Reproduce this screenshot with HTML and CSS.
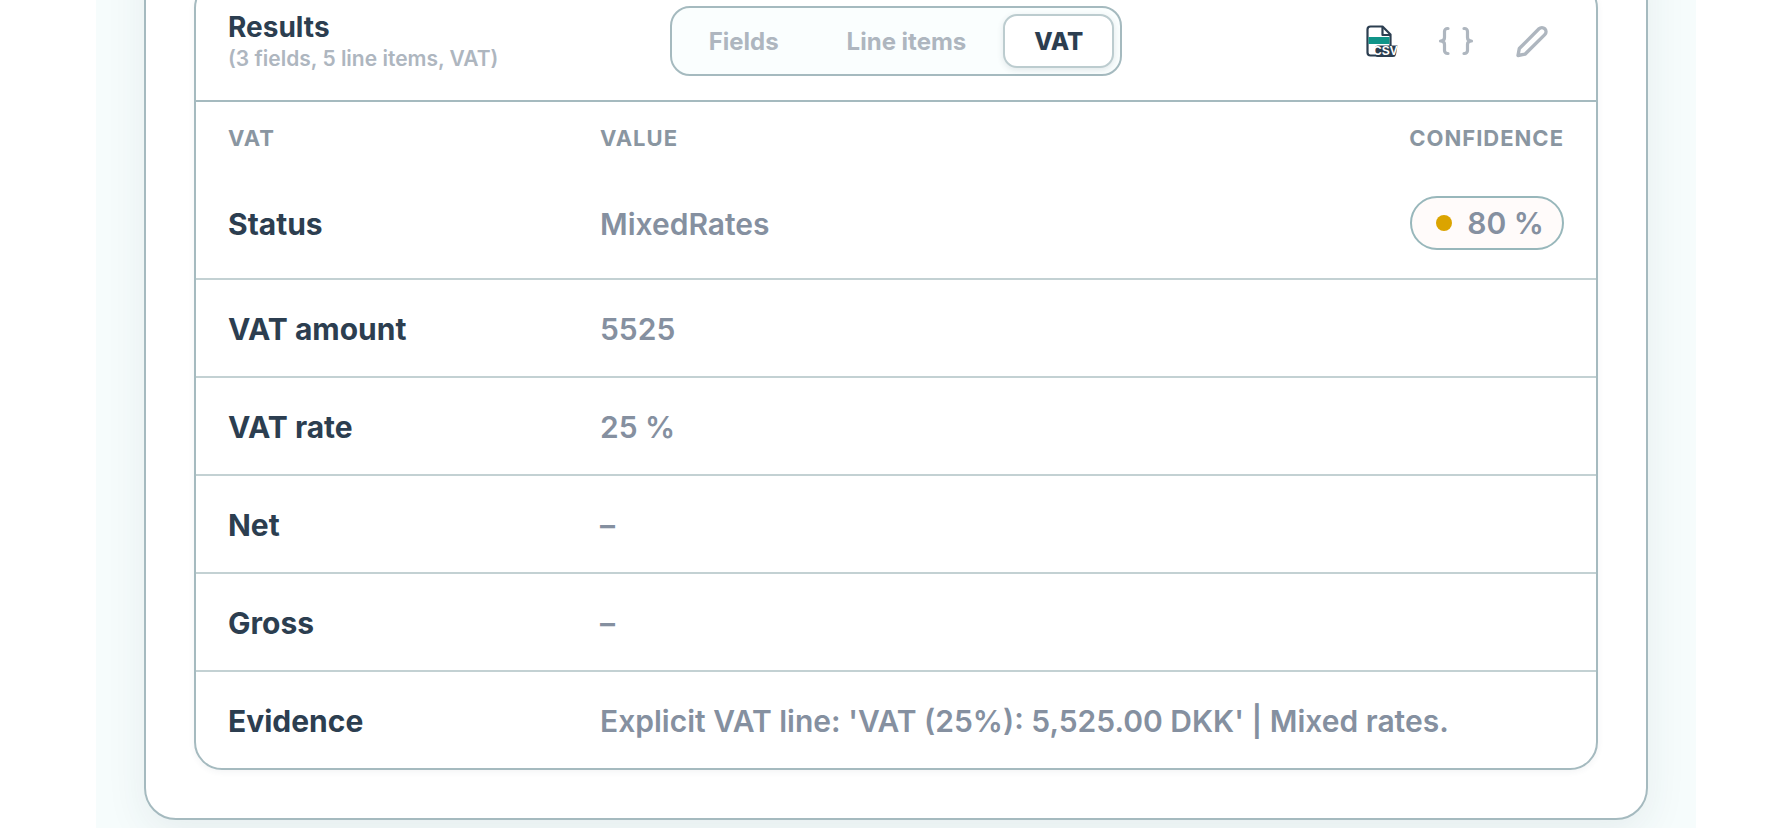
FILE: index.html
```
<!DOCTYPE html>
<html lang="en">
<head>
  <meta charset="UTF-8">
  <title>Results - VAT</title>
  <meta name="viewport" content="width=device-width, initial-scale=1">
  <link rel="stylesheet" href="styles.css">
</head>
<body>
  <main class="page">
    <section class="card">
      <div class="results">
        <header class="results-header">
          <div class="results-title">
            <h2>Results</h2>
            <p>(3 fields, 5 line items, VAT)</p>
          </div>

          <div class="tabs" role="tablist">
            <button type="button" class="tab" role="tab" aria-selected="false">Fields</button>
            <button type="button" class="tab" role="tab" aria-selected="false">Line items</button>
            <button type="button" class="tab active" role="tab" aria-selected="true">VAT</button>
          </div>

          <div class="actions">
            <button type="button" class="icon-btn" aria-label="Download CSV">
              <svg width="36" height="36" viewBox="0 0 36 36" fill="none">
                <path d="M20.5 3.5h-12a3 3 0 0 0-3 3v23a3 3 0 0 0 3 3h17a3 3 0 0 0 3-3v-18z" stroke="#2c3e50" stroke-width="2.2" stroke-linejoin="round"/>
                <path d="M20.5 4v8h8" stroke="#2c3e50" stroke-width="2.2" stroke-linejoin="round"/>
                <rect x="6.5" y="14" width="21" height="7" fill="#109488"/>
                <path d="M16 22.5h19.500l-1.500 9a3 3 0 0 1-3 2.500H16a3 3 0 0 1-3-3v-5.500a3 3 0 0 1 3-3z" fill="#2c3e50"/>
                <text x="11" y="32" class="csv-text">CSV</text>
              </svg>
            </button>
            <button type="button" class="icon-btn" aria-label="View JSON">
              <svg width="36" height="36" viewBox="0 0 36 36" fill="none" stroke="currentColor" stroke-width="3.2" stroke-linecap="round" stroke-linejoin="round">
                <path d="M10 5.500h-.5a3 3 0 0 0-3 3v6c0 2-1.500 3.500-4 3.500 2.500 0 4 1.500 4 3.500v6a3 3 0 0 0 3 3h.5"/>
                <path d="M26 5.500h.5a3 3 0 0 1 3 3v6c0 2 1.500 3.500 4 3.500-2.500 0-4 1.500-4 3.500v6a3 3 0 0 1-3 3h-.5"/>
              </svg>
            </button>
            <button type="button" class="icon-btn" aria-label="Edit">
              <svg width="36" height="36" viewBox="0 0 36 36" fill="none" stroke="currentColor" stroke-width="3.4" stroke-linecap="round" stroke-linejoin="round">
                <path d="M25 5.800a4.100 4.100 0 0 1 5.800 5.800L11 31.200l-7 1.300 1.300-7z"/>
              </svg>
            </button>
          </div>
        </header>

        <table class="vat-table">
          <thead>
            <tr>
              <th scope="col" class="col-name">VAT</th>
              <th scope="col">Value</th>
              <th scope="col" class="col-confidence">Confidence</th>
            </tr>
          </thead>
          <tbody>
            <tr>
              <th scope="row">Status</th>
              <td>MixedRates</td>
              <td class="col-confidence"><span class="badge"><span class="dot"></span>80 %</span></td>
            </tr>
            <tr>
              <th scope="row">VAT amount</th>
              <td colspan="2">5525</td>
            </tr>
            <tr>
              <th scope="row">VAT rate</th>
              <td colspan="2">25 %</td>
            </tr>
            <tr>
              <th scope="row">Net</th>
              <td colspan="2">–</td>
            </tr>
            <tr>
              <th scope="row">Gross</th>
              <td colspan="2">–</td>
            </tr>
            <tr>
              <th scope="row">Evidence</th>
              <td colspan="2">Explicit VAT line: 'VAT (25%): 5,525.00 DKK' | Mixed rates.</td>
            </tr>
          </tbody>
        </table>
      </div>
    </section>
  </main>
</body>
</html>
```
FILE: styles.css
```
* {
  box-sizing: border-box;
}

body {
  margin: 0;
  height: 100vh;
  overflow: hidden;
  font-family: 'Inter', sans-serif;
  background: #ffffff;
  color: #2c3e50;
}

/* the view is scrolled down to the results card */
.page {
  max-width: 1600px;
  margin: -118px auto 0;
  padding: 48px;
  background: #f6fcfc;
}

.card {
  padding: 48px;
  background: #ffffff;
  border: 2px solid #a5babf;
  border-radius: 32px;
  box-shadow: 0 12px 40px rgba(44, 62, 80, 0.08);
}

.results {
  border: 2px solid #a5babf;
  border-radius: 28px;
  box-shadow: 0 2px 6px rgba(44, 62, 80, 0.06);
}

.results-header {
  display: grid;
  grid-template-columns: 1fr auto 1fr;
  align-items: center;
  padding: 24px 32px;
  border-bottom: 2px solid #a5babf;
}

.results-title h2 {
  margin: 0;
  font-size: 28px;
  line-height: 36px;
  font-weight: 700;
}

.results-title p {
  margin: 0;
  font-size: 21px;
  line-height: 28px;
  font-weight: 600;
  color: #aeb6bf;
}

.tabs {
  display: flex;
  gap: 6px;
  padding: 6px;
  background: #fafefe;
  border: 2px solid #a5babf;
  border-radius: 20px;
}

.tab {
  padding: 11px 29px 9px;
  border: 2px solid transparent;
  border-radius: 14px;
  background: none;
  font-family: inherit;
  font-size: 24px;
  line-height: 30px;
  font-weight: 700;
  color: #aeb6bf;
  cursor: pointer;
}

.tab.active {
  background: #ffffff;
  border-color: #bccccf;
  font-weight: 800;
  color: #2c3e50;
  box-shadow: 0 2px 6px rgba(44, 62, 80, 0.12);
}

.actions {
  display: flex;
  justify-content: flex-end;
  gap: 12px;
}

.icon-btn {
  display: flex;
  align-items: center;
  justify-content: center;
  width: 64px;
  height: 64px;
  padding: 0;
  border: none;
  background: none;
  color: #aeb6bf;
  cursor: pointer;
}

.icon-btn svg {
  overflow: visible;
}

.csv-text {
  font-size: 12px;
  font-weight: 800;
  fill: #ffffff;
}

.vat-table {
  width: 100%;
  border-collapse: separate;
  border-spacing: 0;
}

.vat-table th,
.vat-table td {
  padding: 29px 32px 27px;
  border-bottom: 2px solid #c3d1d3;
  text-align: left;
  font-size: 30px;
  line-height: 40px;
  font-weight: 600;
  color: #8590a0;
}

.vat-table tbody th {
  font-weight: 700;
  color: #2c3e50;
}

.vat-table thead th {
  padding: 22px 32px 16px;
  border-bottom: none;
  font-size: 22px;
  line-height: 28px;
  font-weight: 700;
  letter-spacing: 1px;
  text-transform: uppercase;
  color: #8a96a1;
}

.vat-table tbody tr:last-child th,
.vat-table tbody tr:last-child td {
  border-bottom: none;
}

.vat-table .col-name {
  width: 372px;
}

.vat-table .col-confidence {
  text-align: right;
}

.vat-table td.col-confidence {
  padding-top: 28px;
  padding-bottom: 28px;
}

.badge {
  display: inline-flex;
  align-items: center;
  gap: 15px;
  padding: 5px 18px 5px 24px;
  border: 2px solid #98b7bb;
  border-radius: 27px;
  background: #fffbfa;
  vertical-align: top;
}

.dot {
  width: 16px;
  height: 16px;
  border-radius: 50%;
  background: #dba400;
}
```
